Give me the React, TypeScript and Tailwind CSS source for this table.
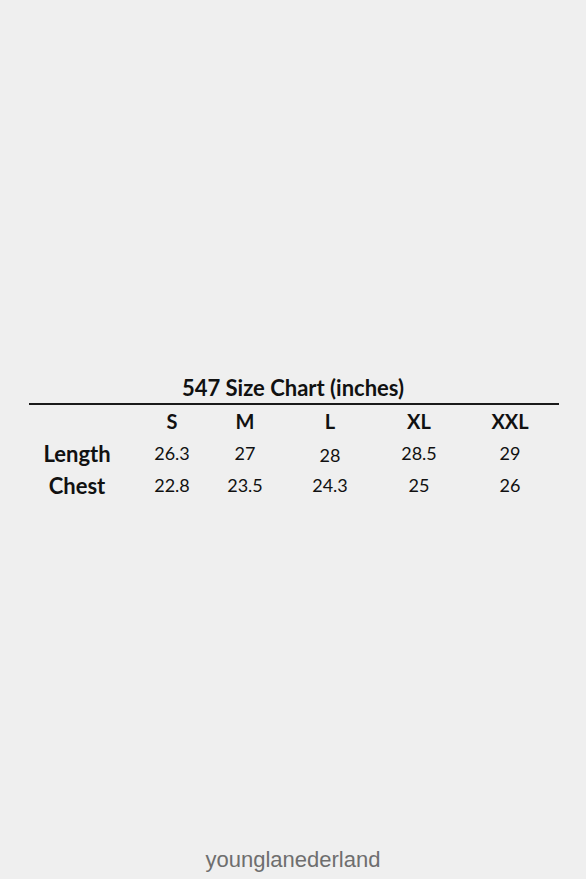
import React from 'react';

const sizes = ['S', 'M', 'L', 'XL', 'XXL'];
const rows = [
  { label: 'Length', values: ['26.3', '27', '28', '28.5', '29'] },
  { label: 'Chest', values: ['22.8', '23.5', '24.3', '25', '26'] },
];

export default function App() {
  return (
    <div className="w-[586px] h-[879px] bg-[#efefef] flex flex-col" style={{ fontFamily: 'Lato, "Open Sans", sans-serif' }}>
      <div className="pt-[374px] px-[29px]">
        <div className="text-center text-[22px] font-bold text-[#111] leading-[28px]">547 Size Chart (inches)</div>
        <div className="w-[530px] h-[2px] bg-[#1a1a1a] mt-[1px]" />
        <div className="grid grid-cols-[96px_94px_52px_118px_60px_122px] text-[#111]">
          <div />
          {sizes.map((s) => (
            <div key={s} className="h-[32px] flex items-center justify-center text-[20px] font-bold">{s}</div>
          ))}
          {rows.map((r) => (
            <React.Fragment key={r.label}>
              <div className="h-[32px] flex items-center justify-center text-[22px] font-bold">{r.label}</div>
              {r.values.map((v, i) => (
                <div key={i} className={`h-[32px] flex items-center justify-center text-[18px] ${v === '28' ? 'pt-[4px]' : ''}`}>{v}</div>
              ))}
            </React.Fragment>
          ))}
        </div>
      </div>
      <div className="mt-auto pb-[5px] text-center text-[22px] text-[#6e6e6e] leading-[28px]" style={{ fontFamily: '"Liberation Sans", Arial, sans-serif' }}>
        younglanederland
      </div>
    </div>
  );
}
